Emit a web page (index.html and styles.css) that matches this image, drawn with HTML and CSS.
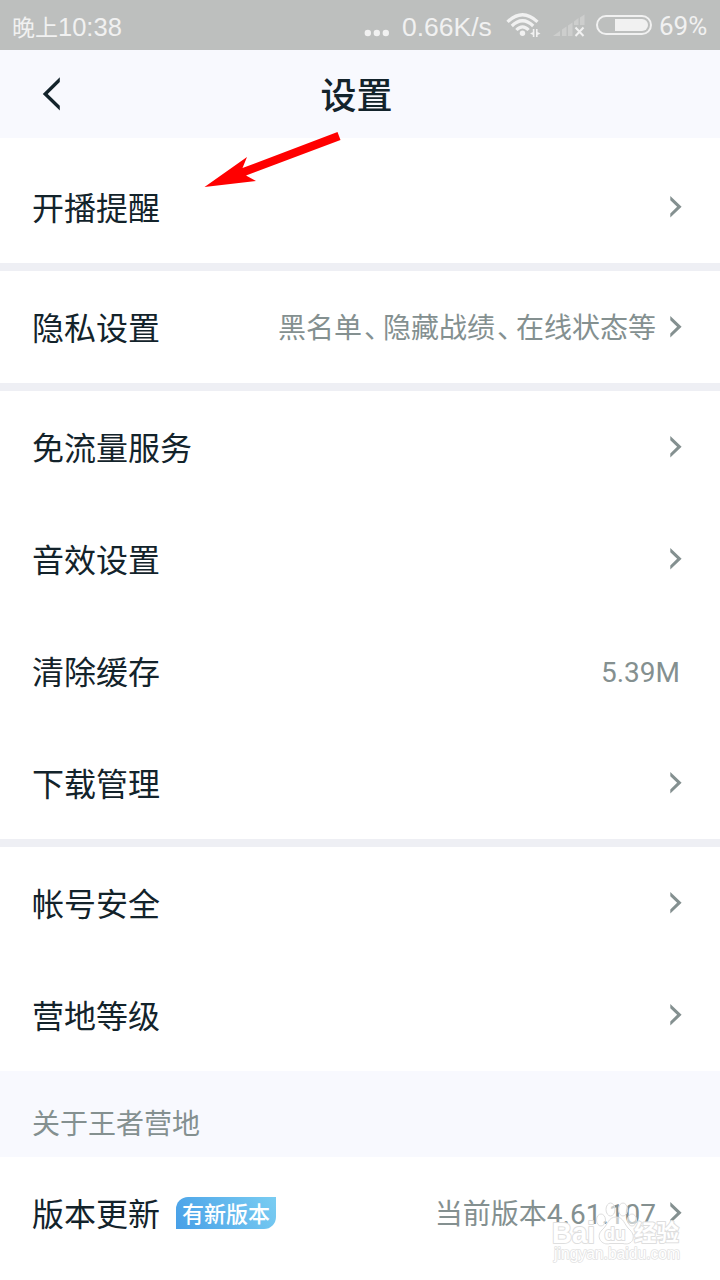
FILE: index.html
```html
<!DOCTYPE html>
<html lang="zh-CN">
<head>
<meta charset="utf-8">
<title>设置</title>
<link rel="stylesheet" href="styles.css">
</head>
<body>
<svg class="defs" width="0" height="0"><defs>
<symbol id="chevron" viewBox="0 0 14 22"><path d="M1.3 0V4.2L8.1 10.8L1.3 17.4V21.6L12.6 10.8Z"/></symbol>
</defs></svg>
<div class="screen">
  <div class="status">
    <span class="time">晚上<span class="clock">10:38</span></span>
    <svg class="dots" width="26" height="8" viewBox="0 0 26 8"><circle cx="3.8" cy="4" r="3.2"/><circle cx="12.8" cy="4" r="3.2"/><circle cx="21.8" cy="4" r="3.2"/></svg>
    <span class="speed">0.66K/s</span>
    <svg class="signals" width="146" height="30" viewBox="506 10 146 30">
      <g fill="none" stroke="#f1f1f1" stroke-width="3.2"><path d="M507.5 21.8Q522.5 7.6 537.5 21.8"/><path d="M511.8 26Q522.5 15.6 533.2 26"/><path d="M516.4 30Q522.5 23.6 528.6 30"/></g>
      <circle cx="522.5" cy="33.3" r="2.7" fill="#f1f1f1"/>
      <path d="M530 33.5L533 32V35ZM532.8 29h1.6v8h-1.6ZM536 29h1.6v8h-1.6ZM537.5 32L540.5 33.5L537.5 35Z" fill="#f1f1f1"/>
      <g fill="#cdcecd"><path d="M553 36L560 31V36Z"/><path d="M562 36V29.5L566.5 26.5V36Z"/><path d="M568 36V25.5L572.5 22.5V36Z"/><path d="M574 25V21.5L578.5 18V25Z"/><path d="M580 25V17.5L584.5 14.5V25Z"/></g>
      <path d="M575.5 27.5L583.5 36M583.5 27.5L575.5 36" stroke="#f1f1f1" stroke-width="2"/>
      <rect x="597" y="16" width="54" height="18" rx="9" fill="none" stroke="#f1f1f1" stroke-width="2"/>
      <path d="M615 19H642A6 6 0 0 1 642 31H615Z" fill="#f1f1f1"/>
    </svg>
    <span class="percent">69%</span>
  </div>
  <header class="header">
    <svg class="back" width="20" height="34" viewBox="0 0 20 34"><path d="M17.8 0.2V5L5.7 17L17.8 28.8V33.6L0.8 17Z"/></svg>
    <h1 class="title">设置</h1>
  </header>
  <main>
    <section class="group first">
      <div class="row"><span class="label">开播提醒</span><svg class="arrow"><use href="#chevron"/></svg></div>
    </section>
    <section class="group">
      <div class="row"><span class="label">隐私设置</span><span class="value">黑名单<span class="comma">、</span>隐藏战绩<span class="comma">、</span>在线状态等</span><svg class="arrow"><use href="#chevron"/></svg></div>
    </section>
    <section class="group">
      <div class="row"><span class="label">免流量服务</span><svg class="arrow"><use href="#chevron"/></svg></div>
      <div class="row"><span class="label">音效设置</span><svg class="arrow"><use href="#chevron"/></svg></div>
      <div class="row"><span class="label">清除缓存</span><span class="value size">5.39M</span></div>
      <div class="row"><span class="label">下载管理</span><svg class="arrow"><use href="#chevron"/></svg></div>
    </section>
    <section class="group last">
      <div class="row"><span class="label">帐号安全</span><svg class="arrow"><use href="#chevron"/></svg></div>
      <div class="row"><span class="label">营地等级</span><svg class="arrow"><use href="#chevron"/></svg></div>
    </section>
    <h2 class="about">关于王者营地</h2>
    <div class="row"><span class="label">版本更新</span><span class="badge">有新版本</span><span class="value">当前版本4.61.107</span><svg class="arrow"><use href="#chevron"/></svg></div>
  </main>
  <svg class="pointer" width="140" height="60" viewBox="202 130 140 60"><path d="M337.5 132L340.5 140L246 175.5L256 181L204.5 187L247 157L242.5 168Z"/></svg>
  <svg class="watermark" width="136" height="74" viewBox="548 1196 136 74">
    <g class="paw">
      <ellipse cx="601" cy="1220" rx="4.5" ry="6"/><ellipse cx="610.5" cy="1209.5" rx="4.5" ry="6.5"/><ellipse cx="623" cy="1209.5" rx="4.5" ry="6.5"/><ellipse cx="632" cy="1220" rx="4.5" ry="6"/>
      <path d="M616 1217C608 1217 608 1225 602 1230C595 1237 602 1246 610 1243.5H623C632 1246 637 1237 630 1230C624 1225 624 1217 616 1217Z"/>
    </g>
    <g class="mark">
      <text class="brand" x="552" y="1242.5" textLength="43" lengthAdjust="spacingAndGlyphs">Bai</text>
      <text class="du" x="604.5" y="1240" textLength="21" lengthAdjust="spacingAndGlyphs">du</text>
      <text class="jy" x="634" y="1241" textLength="45">经验</text>
      <text class="url" x="554" y="1259" textLength="126" lengthAdjust="spacingAndGlyphs">jingyan.baidu.com</text>
    </g>
  </svg>
</div>
</body>
</html>
```
FILE: styles.css
```css
* { box-sizing: border-box; }
body { margin: 0; background: #fff; font-family: Roboto, "Noto Sans CJK SC", sans-serif; color: #13232b; }
.defs { position: absolute; }
.screen { position: relative; width: 720px; height: 1280px; overflow: hidden; background: #fff; }
.status { display: flex; align-items: center; height: 50px; padding: 0 12px; background: #bdbfbe; color: #f1f1f1; font-family: "Noto Sans CJK SC", sans-serif; font-size: 26px; line-height: 50px; white-space: nowrap; }
.time { width: 112px; padding-top: 2px; font-size: 23px; }
.clock { font-family: "Liberation Sans", sans-serif; font-size: 25.5px; }
.dots { margin: 16px 12px 0 240px; fill: #f1f1f1; }
.speed { width: 92px; font-family: "Liberation Sans", sans-serif; font-size: 26.5px; padding-top: 3px; }
.signals { margin-left: 12px; flex: none; }
.percent { margin-left: 7px; padding-top: 1px; font-family: Roboto, sans-serif; font-size: 26px; }
.header { display: grid; grid-template-columns: 60px 1fr 60px; align-items: center; height: 88px; background: #f8f9fe; }
.back { margin-left: 42px; fill: #13232b; }
.title { margin: 0; padding: 5px 7px 0 0; text-align: center; font-size: 36px; font-weight: 500; line-height: 50px; }
.group { border-bottom: 8px solid #eeeff4; }
.first { padding-top: 13px; }
.last { border-bottom: 0; }
.row { display: flex; align-items: center; height: 112px; padding: 0 37px 0 32px; }
.label { padding-top: 4px; font-size: 32px; line-height: 48px; }
.value { margin-left: auto; padding-top: 4px; font-size: 28px; line-height: 42px; color: #849090; white-space: nowrap; }
.comma { display: inline-block; width: 21px; text-indent: 2px; }
.size { margin-right: 3px; }
.arrow { width: 14px; height: 22px; margin-left: auto; fill: #849090; flex: none; }
.value + .arrow { margin-left: 13px; }
.about { height: 86px; margin: 0; padding: 20px 32px 0; background: #f8f9fe; color: #849090; font-size: 28px; font-weight: 400; line-height: 68px; }
.badge { width: 100px; height: 32px; margin-left: 16px; padding-top: 2px; border-radius: 12px 0 12px 0; background: linear-gradient(60deg, #479fe7, #7acdf2); color: #fff; font-size: 22px; font-weight: 500; line-height: 32px; text-align: center; }
.pointer { position: absolute; left: 202px; top: 130px; fill: #f00; }
.watermark { position: absolute; left: 548px; top: 1196px; }
.paw { fill: #fff; fill-opacity: .55; stroke: #dedede; stroke-width: 1; }
.mark { fill: #fff; stroke: #dedede; stroke-width: 2; stroke-linejoin: round; paint-order: stroke; font-family: "Liberation Sans", "Noto Sans CJK SC", sans-serif; }
.brand { font-size: 29px; font-weight: 700; }
.du { font-size: 19px; font-weight: 700; }
.jy { font-size: 22.5px; font-weight: 700; }
.url { font-size: 16px; stroke: #e2e2e2; stroke-width: 1.6; }
```
